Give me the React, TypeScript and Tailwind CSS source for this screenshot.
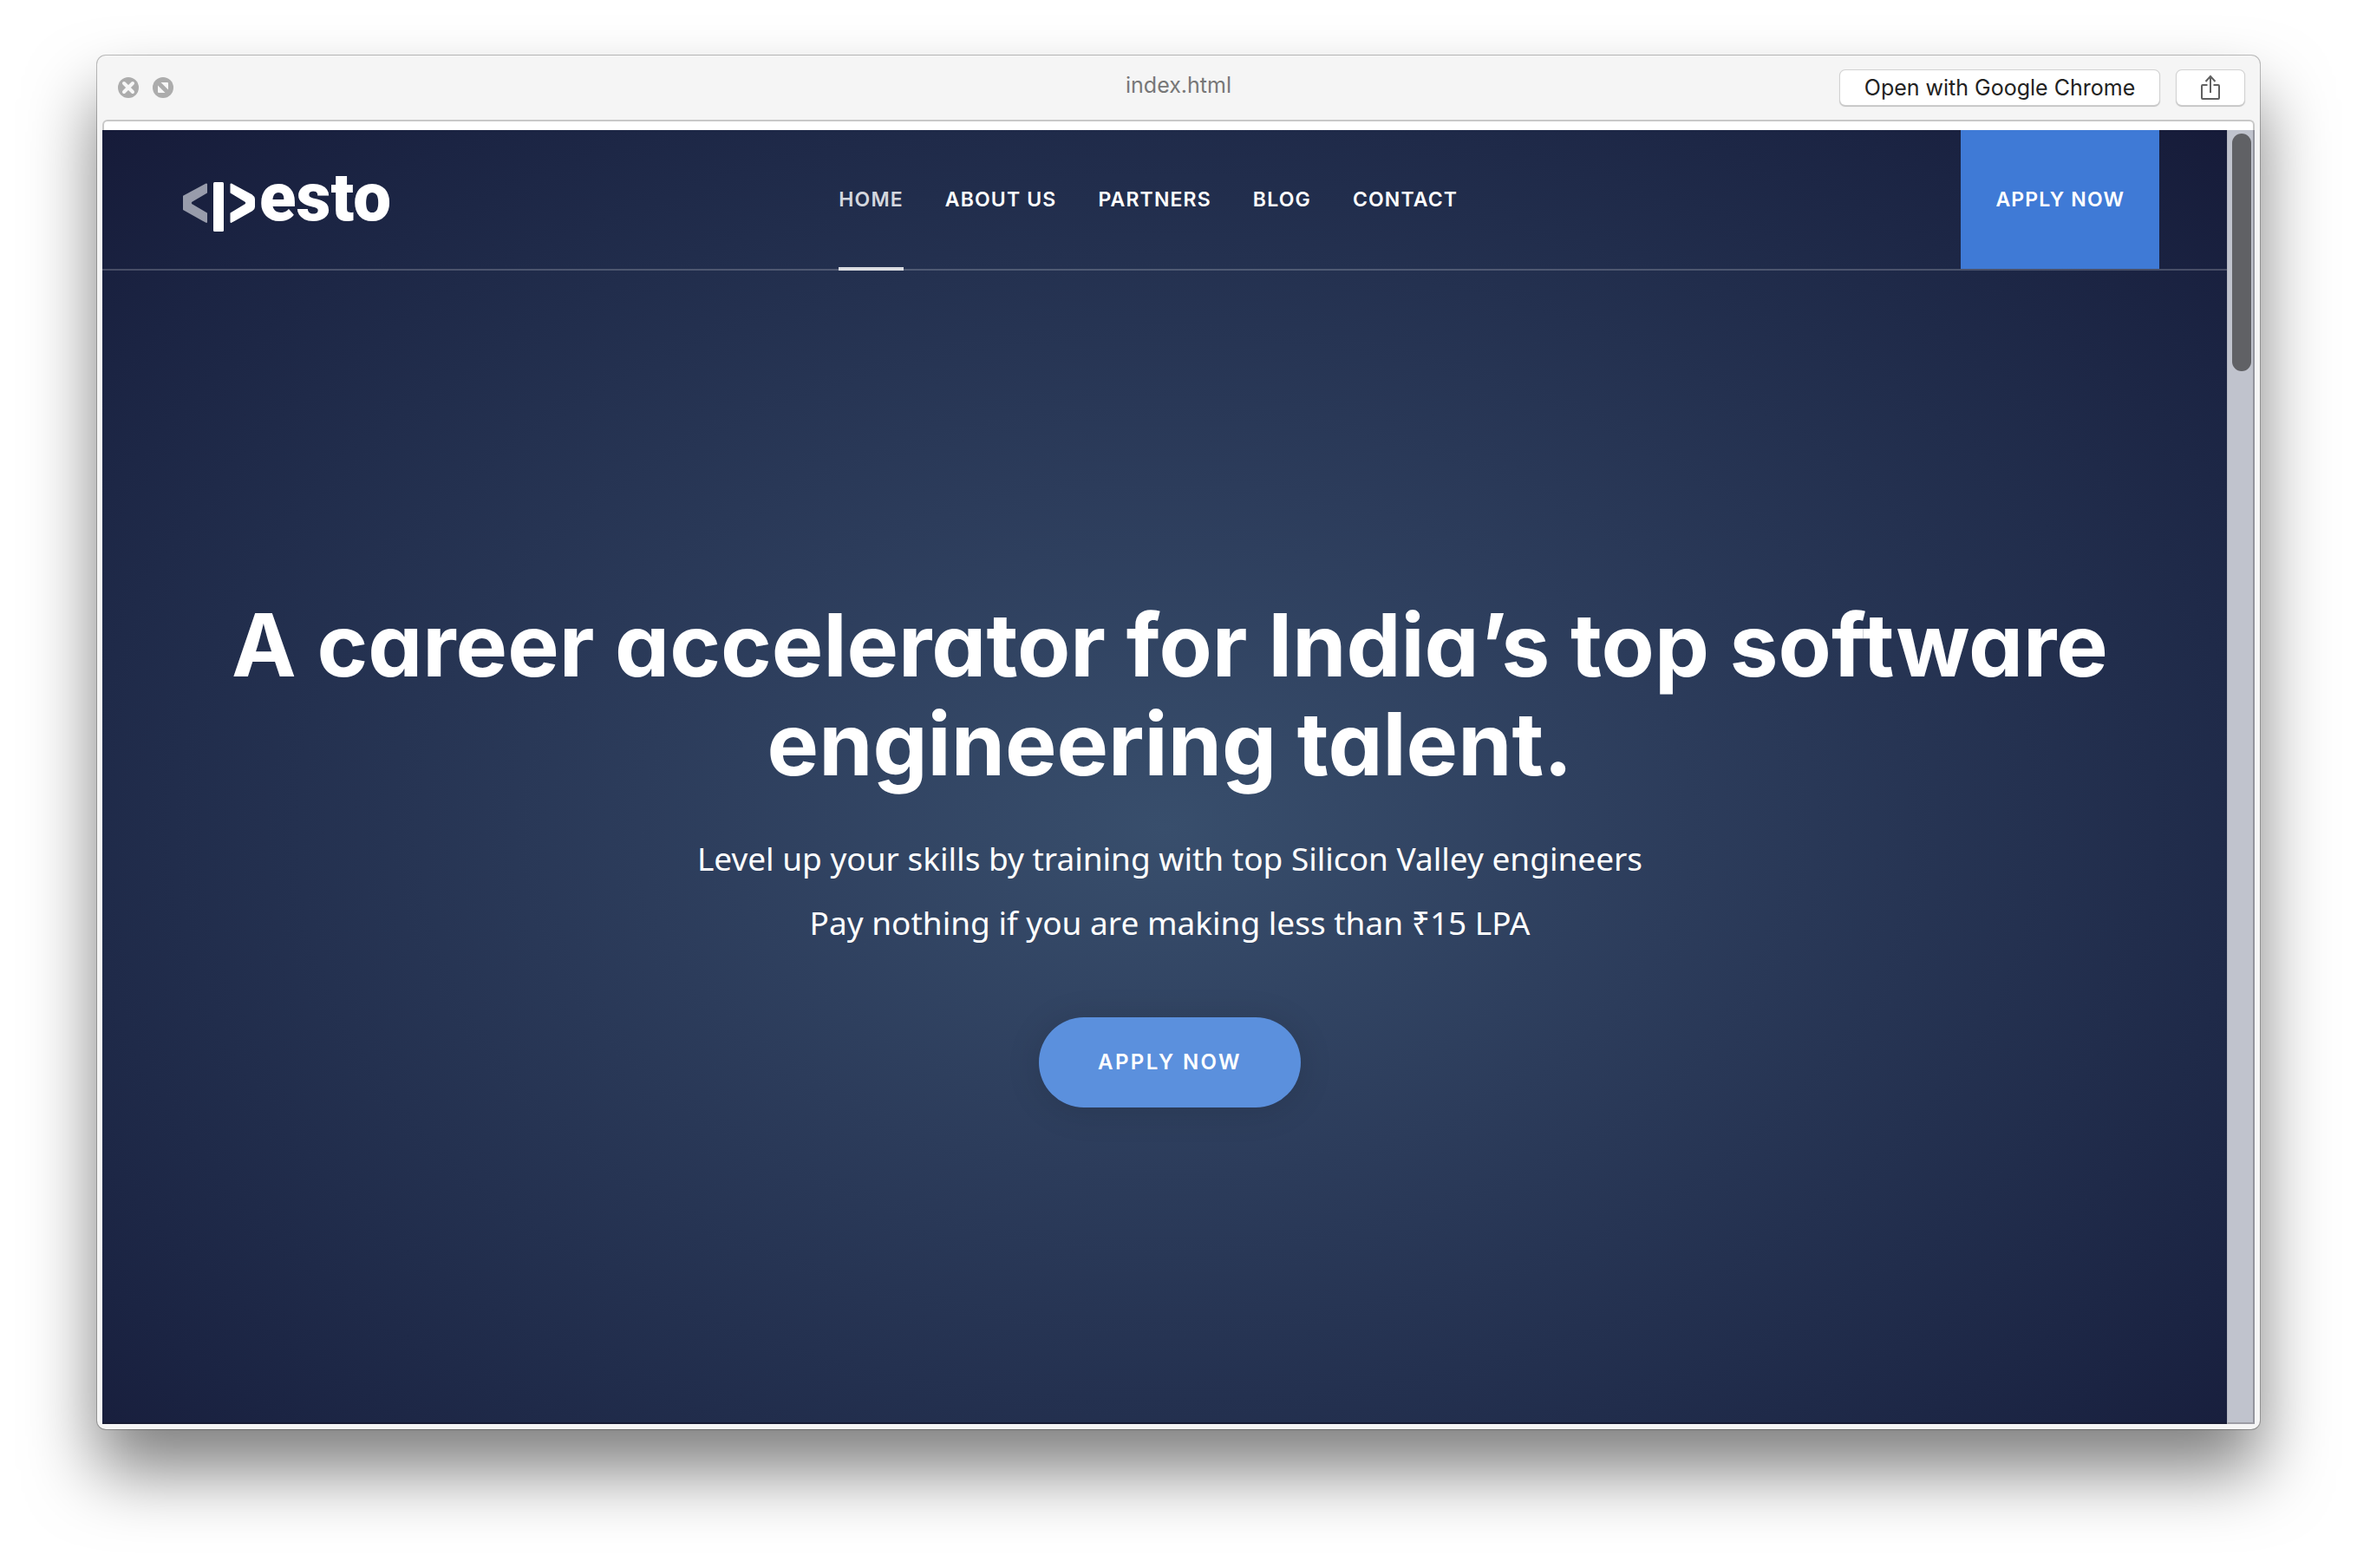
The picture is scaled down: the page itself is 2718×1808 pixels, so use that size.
const links = ["About us", "Partners", "Blog", "Contact"];

function CloseIcon() {
  return (
    <svg viewBox="0 0 24 24" className="size-6" aria-hidden="true">
      <circle cx="12" cy="12" r="12" fill="#acacac" />
      <path d="M7 7l10 10M17 7L7 17" stroke="#f7f7f7" strokeWidth="4" strokeLinecap="round" />
    </svg>
  );
}

function ExpandIcon() {
  return (
    <svg viewBox="0 0 24 24" className="size-6" aria-hidden="true">
      <circle cx="12" cy="12" r="12" fill="#acacac" />
      <path d="M9.5 6H17a1 1 0 0 1 1 1v7.5zM6 9.5L14.500 18H7a1 1 0 0 1-1-1z" fill="#f7f7f7" />
    </svg>
  );
}

function ShareIcon() {
  return (
    <svg viewBox="0 0 24 30" className="h-[30px] w-6" fill="none" stroke="#606060" strokeWidth="2" aria-hidden="true">
      <path d="M8.500 12H3a1 1 0 0 0-1 1v14a1 1 0 0 0 1 1h18a1 1 0 0 0 1-1V13a1 1 0 0 0-1-1h-5.500" />
      <path d="M12 21V2M6.500 8L12 2l5.500 6" />
    </svg>
  );
}

function TitleBar() {
  return (
    <div className="grid h-[74px] grid-cols-[1fr_auto_1fr] items-center px-[18px] text-[25px]">
      <div className="flex gap-4 pl-1.5">
        <button type="button" aria-label="Close" className="rounded-full">
          <CloseIcon />
        </button>
        <button type="button" aria-label="Full screen" className="rounded-full">
          <ExpandIcon />
        </button>
      </div>
      <div className="pb-1 text-[#777777]">index.html</div>
      <div className="flex justify-end gap-5">
        <button
          type="button"
          className="h-10 w-[368px] rounded-md bg-white leading-[40px] text-[#222222] shadow-[0_0_0_1px_#d2d2d2,0_1px_1px_1px_#bdbdbd]"
        >
          Open with Google Chrome
        </button>
        <button
          type="button"
          aria-label="Share"
          className="flex h-10 w-[78px] items-center justify-center rounded-md bg-white shadow-[0_0_0_1px_#d2d2d2,0_1px_1px_1px_#bdbdbd]"
        >
          <ShareIcon />
        </button>
      </div>
    </div>
  );
}

function Logo() {
  return (
    <a href="#home" aria-label="Pesto" className="flex items-center text-white">
      <svg viewBox="211 192 88 76" className="h-[76px] w-[88px]" strokeLinejoin="round" strokeWidth="2" aria-hidden="true">
        <path
          d="M238 212.500V222L221 232Q218.500 234 221 236L238 246V256L212 241.500V226.500Z"
          fill="#989cab"
          stroke="#989cab"
        />
        <rect x="246" y="210" width="12" height="57" rx="1.500" fill="#fff" />
        <path
          d="M266.500 212.500V222L283 232Q285.500 234 283 236L266.500 246V256L290.500 242.500Q293 241 293 238.500V229.500Q293 227 290.500 225.500Z"
          fill="#fff"
          stroke="#fff"
        />
      </svg>
      <span className="pb-1 font-[Roboto,sans-serif] text-[78px] leading-[78px] font-black">esto</span>
    </a>
  );
}

function Header() {
  return (
    <header className="flex h-[162px] border-b-2 border-white/20 pr-[78px] pl-[93px] text-[23px] font-semibold tracking-wider text-white uppercase">
      <div className="flex items-center tracking-normal normal-case">
        <Logo />
      </div>
      <nav className="flex flex-1 justify-center gap-12 pr-16">
        <a href="#home" className="relative flex items-center text-[#d4d7de]">
          Home
          <span className="absolute inset-x-0 -bottom-0.5 h-1 bg-[#dadce1]" />
        </a>
        {links.map((label) => (
          <a key={label} href={"#" + label.toLowerCase().replace(" ", "-")} className="flex items-center">
            {label}
          </a>
        ))}
      </nav>
      <a href="#apply" className="flex items-center bg-[#3f7ad6] px-10">
        Apply now
      </a>
    </header>
  );
}

function Hero() {
  return (
    <section className="flex flex-1 flex-col items-center justify-center pt-3 pl-3 text-center text-white">
      <h1 className="px-20 text-[100px] leading-[114px] font-bold [font-feature-settings:'cv11']">
        A career accelerator for India’s top software engineering talent.
      </h1>
      <div className="mt-[38px] font-['Noto_Sans',sans-serif] text-[37px] leading-[74px]">
        <p>Level up your skills by training with top Silicon Valley engineers</p>
        <p>Pay nothing if you are making less than ₹15 LPA</p>
      </div>
      <a
        href="#apply"
        className="mt-[72px] flex h-[104px] items-center rounded-full bg-[#5b90dd] px-[68px] text-2xl font-semibold tracking-widest uppercase shadow-[0_4px_40px_rgba(0,0,0,0.12)]"
      >
        Apply now
      </a>
    </section>
  );
}

export default function App() {
  return (
    <div className="flex min-h-screen bg-white px-[112px] pt-16 pb-40 font-[Inter,sans-serif]">
      <div className="flex flex-1 flex-col rounded-[10px] bg-[#f5f5f5] shadow-[0_0_0_1px_rgba(0,0,0,0.25),0_48px_80px_rgba(0,0,0,0.5)]">
        <TitleBar />
        <div className="mx-1.5 mb-1.5 flex flex-1 flex-col">
          <div className="h-3 rounded-t-md border-2 border-b-0 border-[#c8c8c8] bg-white" />
          <div className="flex flex-1">
            <main className="flex flex-1 flex-col border-b-2 border-[#171b33] bg-[radial-gradient(ellipse_farthest-corner_at_50%_54%,#384e6c_0%,#2c3c5b_35%,#212d4c_66%,#1b2443_84%,#161b39_100%)]">
              <Header />
              <Hero />
            </main>
            <div className="w-8 border-r-2 border-b-2 border-l border-r-[#93949d] border-b-[#9c9ca4] border-l-[#b4b7c0] bg-[#c0c3cd] pt-1 pr-0.5 pl-[5px]">
              <div className="h-[274px] rounded-full bg-[#606165]" />
            </div>
          </div>
        </div>
      </div>
    </div>
  );
}
